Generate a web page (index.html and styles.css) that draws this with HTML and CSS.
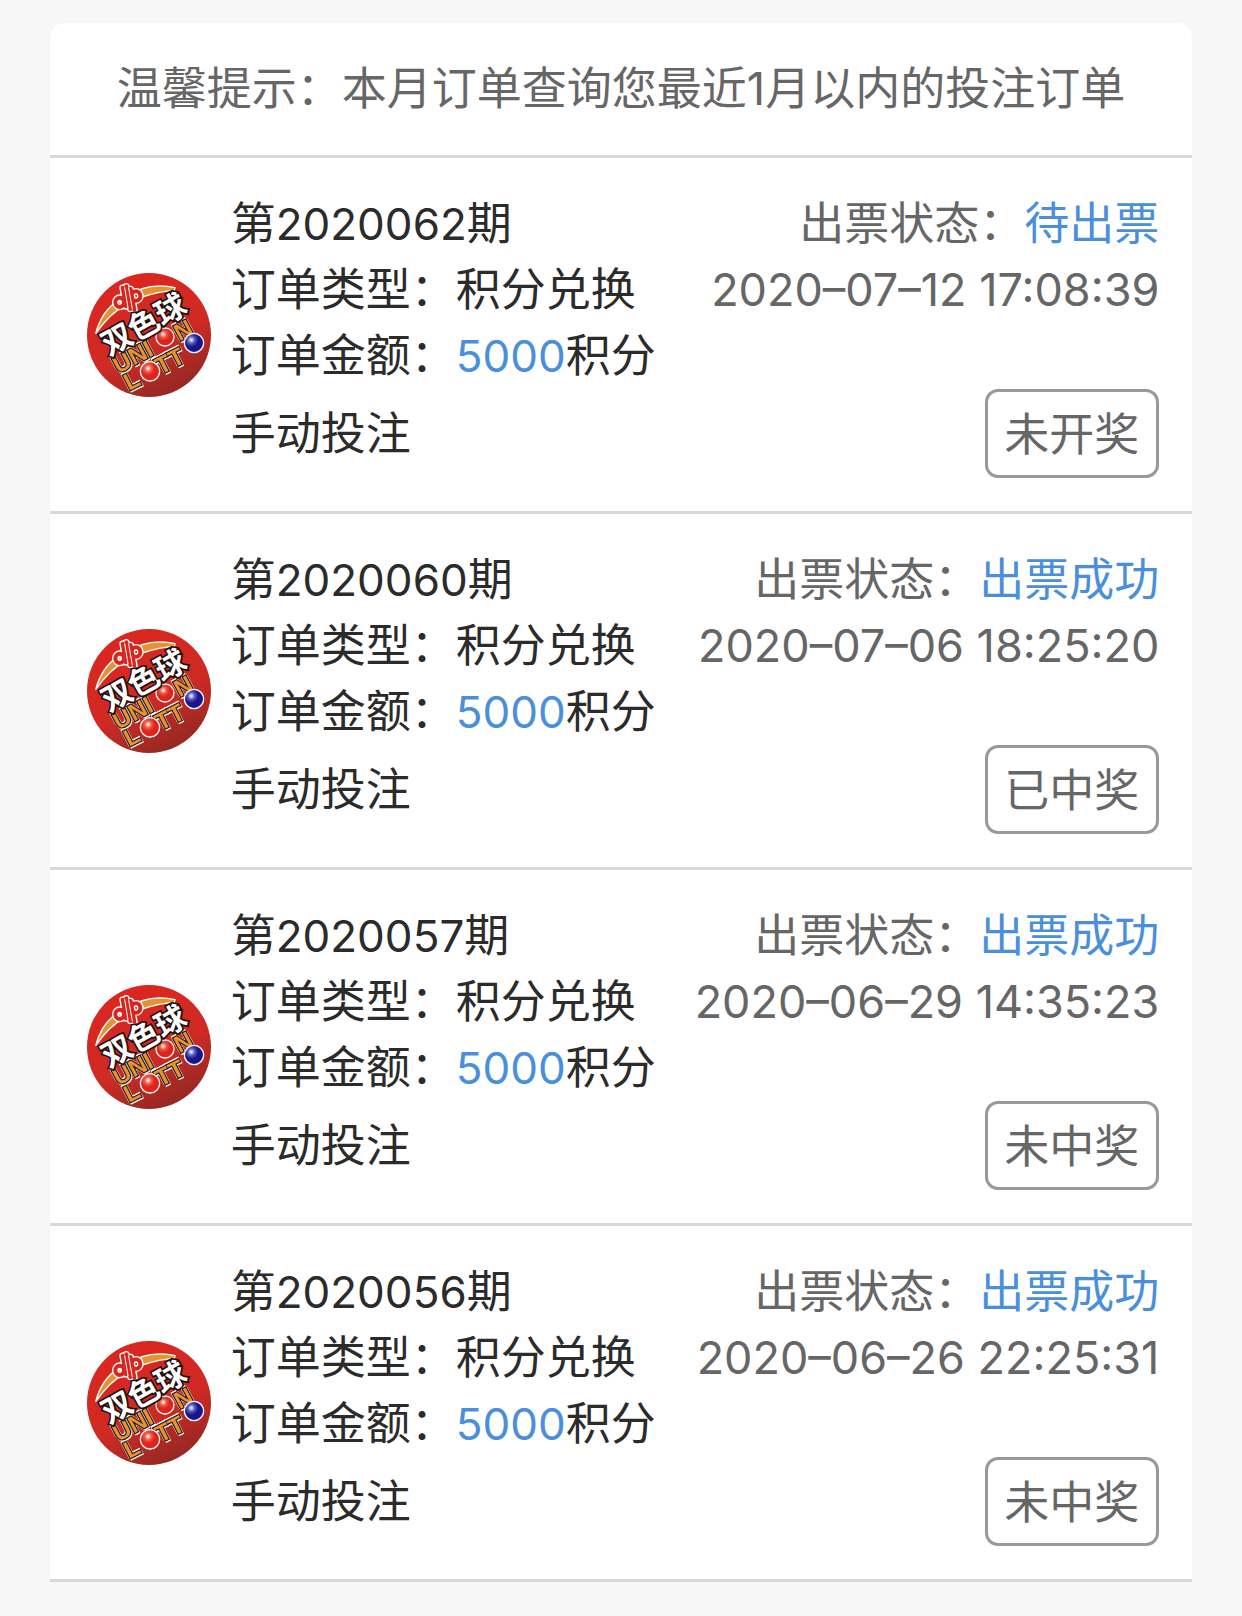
FILE: index.html
```html
<!DOCTYPE html>
<html lang="zh-CN">

<head>
    <meta charset="utf-8">
    <meta name="viewport" content="width=device-width, initial-scale=1.0">
    <title>本月订单</title>
    <link rel="stylesheet" href="styles.css">
</head>

<body>
    <!-- logo, bruges i alle ordrer -->
    <svg class="defs" width="0" height="0" aria-hidden="true">
        <defs>
            <linearGradient id="red" x1="0.3" y1="0" x2="0.8" y2="1">
                <stop offset="0" stop-color="#dc261f" />
                <stop offset="0.55" stop-color="#cf2a24" />
                <stop offset="1" stop-color="#8a2823" />
            </linearGradient>
            <radialGradient id="ball-red" cx="0.4" cy="0.35" r="0.6">
                <stop offset="0" stop-color="#fff" />
                <stop offset="0.3" stop-color="#ee5a48" />
                <stop offset="0.6" stop-color="#e0241c" />
            </radialGradient>
            <radialGradient id="ball-blue" cx="0.36" cy="0.34" r="0.6">
                <stop offset="0" stop-color="#fff" />
                <stop offset="0.3" stop-color="#5a5cc0" />
                <stop offset="0.6" stop-color="#17178a" />
            </radialGradient>
        </defs>
        <symbol id="logo" viewBox="34 30 372 372">
            <circle cx="220" cy="216" r="186" fill="url(#red)" />
            <path d="M60 212C72 165 94 134 128 112L146 130C112 145 88 172 60 212Z" fill="#e8912f" stroke="#fff" stroke-width="4" />
            <path d="M196 78C232 66 266 66 298 74L296 83C262 84 236 90 200 102Z" fill="#e8912f" stroke="#fff" stroke-width="4" />
            <g fill="none" stroke-linejoin="round" stroke-linecap="round">
                <path d="M119 118a13 14 0 1 0 26 0a13 14 0 1 0 -26 0M168 99a13 14 0 1 0 26 0a13 14 0 1 0 -26 0M141 74L151 130M152 70L164 138M165 78L176 140" stroke="#fff" stroke-width="20" />
                <path d="M119 118a13 14 0 1 0 26 0a13 14 0 1 0 -26 0M168 99a13 14 0 1 0 26 0a13 14 0 1 0 -26 0M141 74L151 130M152 70L164 138M165 78L176 140" stroke="#d9251d" stroke-width="12" />
                <path d="M147 74L157 134M159 76L170 138" stroke="#fff" stroke-width="3" />
            </g>
            <g class="logo-en">
                <g transform="rotate(-28 128 333)">
                    <text x="128" y="333">UNI</text>
                    <text x="336" y="333">N</text>
                </g>
                <g transform="rotate(-27 160 384)">
                    <text x="160" y="384">L</text>
                    <text x="266" y="384">TT</text>
                </g>
            </g>
            <circle cx="268" cy="222" r="27" fill="url(#ball-red)" stroke="#fff" stroke-width="4" />
            <circle cx="223" cy="325" r="29" fill="url(#ball-red)" stroke="#fff" stroke-width="4" />
            <circle cx="355" cy="240" r="29" fill="url(#ball-blue)" stroke="#fff" stroke-width="4" />
            <text class="logo-cn" x="100" y="280" transform="rotate(-29 100 280)">双色球</text>
        </symbol>
    </svg>

    <main class="card">
        <p class="tip">温馨提示：本月订单查询您最近1月以内的投注订单</p>

        <article class="order">
            <svg class="logo" role="img" aria-label="双色球"><use href="#logo" /></svg>
            <div class="info">
                <h2>第<span class="num">2020062</span>期</h2>
                <p>订单类型：积分兑换</p>
                <p>订单金额：<span class="num blue">5000</span>积分</p>
                <p class="mode">手动投注</p>
            </div>
            <div class="status">
                <p>出票状态：<span class="blue">待出票</span></p>
                <time>2020–07–12 17:08:39</time>
                <button type="button">未开奖</button>
            </div>
        </article>

        <article class="order">
            <svg class="logo" role="img" aria-label="双色球"><use href="#logo" /></svg>
            <div class="info">
                <h2>第<span class="num">2020060</span>期</h2>
                <p>订单类型：积分兑换</p>
                <p>订单金额：<span class="num blue">5000</span>积分</p>
                <p class="mode">手动投注</p>
            </div>
            <div class="status">
                <p>出票状态：<span class="blue">出票成功</span></p>
                <time>2020–07–06 18:25:20</time>
                <button type="button">已中奖</button>
            </div>
        </article>

        <article class="order">
            <svg class="logo" role="img" aria-label="双色球"><use href="#logo" /></svg>
            <div class="info">
                <h2>第<span class="num">2020057</span>期</h2>
                <p>订单类型：积分兑换</p>
                <p>订单金额：<span class="num blue">5000</span>积分</p>
                <p class="mode">手动投注</p>
            </div>
            <div class="status">
                <p>出票状态：<span class="blue">出票成功</span></p>
                <time>2020–06–29 14:35:23</time>
                <button type="button">未中奖</button>
            </div>
        </article>

        <article class="order">
            <svg class="logo" role="img" aria-label="双色球"><use href="#logo" /></svg>
            <div class="info">
                <h2>第<span class="num">2020056</span>期</h2>
                <p>订单类型：积分兑换</p>
                <p>订单金额：<span class="num blue">5000</span>积分</p>
                <p class="mode">手动投注</p>
            </div>
            <div class="status">
                <p>出票状态：<span class="blue">出票成功</span></p>
                <time>2020–06–26 22:25:31</time>
                <button type="button">未中奖</button>
            </div>
        </article>
    </main>
</body>

</html>
```
FILE: styles.css
```css
* {
    box-sizing: border-box;
}

body {
    margin: 0;
    padding: 23px 4%;
    background-color: #f7f7f7;
    font-family: Inter, "Noto Sans CJK SC", sans-serif;
    font-size: 45px;
    line-height: 66px;
    color: #2b2b2b;
}

h2,
p {
    margin: 0;
    font-size: 45px;
    font-weight: 400;
}

.defs {
    position: absolute;
}

.card {
    background-color: #fff;
    border-radius: 15px 15px 0 0;
}

.tip {
    padding: 33px;
    border-bottom: 3px solid #d8d8d8;
    text-align: center;
    white-space: nowrap;
    color: #666;
}

.order {
    display: flex;
    align-items: center;
    padding: 33px 33px 33px 37px;
    border-bottom: 3px solid #d8d8d8;
    white-space: nowrap;
}

.logo {
    flex: none;
    width: 124px;
    height: 124px;
    margin-right: 20px;
}

.info .mode {
    line-height: 89px;
}

.num {
    font-size: 44px;
}

.status {
    display: flex;
    flex-direction: column;
    align-items: flex-end;
    margin-left: auto;
    color: #666;
}

.status button {
    height: 89px;
    margin-top: 66px;
    padding: 0 17px 4px 16px;
    border: 3px solid #999;
    border-radius: 13px;
    background-color: #fff;
    font-family: inherit;
    font-size: 45px;
    color: #666;
}

.blue {
    color: #4a8fdc;
}

.logo-cn {
    font-family: "Noto Sans CJK SC", sans-serif;
    font-size: 92px;
    font-weight: 700;
    fill: #fff;
    stroke: #1a1010;
    stroke-width: 10px;
    paint-order: stroke;
}

.logo-en {
    font-family: "Liberation Sans", sans-serif;
    font-size: 72px;
    font-weight: 700;
    fill: #e8912f;
    stroke: #1a1010;
    stroke-width: 7px;
    paint-order: stroke;
    filter: drop-shadow(3px 3px 0 #fff) drop-shadow(-3px -3px 0 #fff);
}
```
